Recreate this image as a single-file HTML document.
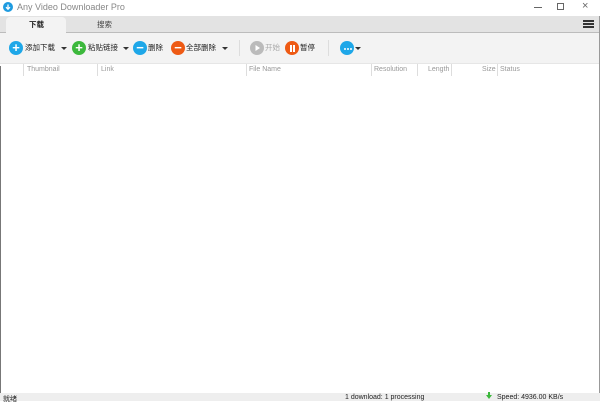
<!DOCTYPE html>
<html><head><meta charset="utf-8"><style>
*{margin:0;padding:0;box-sizing:border-box}
body{width:600px;height:401px;overflow:hidden;background:#fff;font-family:"Liberation Sans","Noto Sans CJK SC",sans-serif;position:relative}
.abs{position:absolute}
.t{font-size:7.5px;color:#222;white-space:nowrap;line-height:10px}
.ic{position:absolute;width:14px;height:14px;border-radius:50%;color:#fff;font-size:13px;line-height:14px;text-align:center;font-weight:bold}
.h{position:absolute;top:66px;font-size:7px;color:#999}
.sep{position:absolute;top:64px;width:1px;height:12px;background:#ddd}
.dd{position:absolute;width:0;height:0;border-left:3px solid transparent;border-right:3px solid transparent;border-top:3px solid #333}
</style></head><body>
<div class="abs" style="left:0;top:0;width:600px;height:16px;background:#fff"></div>
<div class="abs" style="left:3px;top:2px;width:10px;height:10px;border-radius:50%;background:#1e9be0"></div>
<svg class="abs" style="left:3px;top:2px" width="10" height="10"><path d="M5 2.5V7M3 5.2L5 7.2 7 5.2" stroke="#fff" stroke-width="1.3" fill="none"/></svg>
<div class="abs" style="left:17px;top:2px;font-size:9px;color:#888;white-space:nowrap">Any Video Downloader Pro</div>
<div class="abs" style="left:534px;top:7px;width:8px;height:1px;background:#666"></div>
<div class="abs" style="left:557px;top:3px;width:7px;height:7px;border:1px solid #666"></div>
<div class="abs" style="left:582px;top:0px;font-size:11px;color:#666">×</div>
<div class="abs" style="left:0;top:16px;width:600px;height:17px;background:#e3e3e3;border-bottom:1px solid #bcbcbc"></div>
<div class="abs" style="left:6px;top:17px;width:60px;height:16px;background:#f3f3f3;border-radius:4px 4px 0 0"></div>
<div class="abs t" style="left:29px;top:20px;font-weight:bold">下载</div>
<div class="abs t" style="left:97px;top:20px;color:#444">搜索</div>
<div class="abs" style="left:583px;top:20px;width:11px;height:2px;background:#333;box-shadow:0 3px 0 #333,0 6px 0 #333"></div>
<div class="abs" style="left:0;top:33px;width:600px;height:30px;background:#f3f3f3"></div>
<div class="ic" style="left:9px;top:41px;background:#1ea7e8">+</div>
<div class="abs t" style="left:25px;top:43px">添加下载</div>
<div class="dd" style="left:61px;top:47px"></div>
<div class="ic" style="left:72px;top:41px;background:#3cb83c">+</div>
<div class="abs t" style="left:88px;top:43px">粘贴链接</div>
<div class="dd" style="left:123px;top:47px"></div>
<div class="ic" style="left:133px;top:41px;background:#1ea7e8">−</div>
<div class="abs t" style="left:148px;top:43px">删除</div>
<div class="ic" style="left:171px;top:41px;background:#ee5a14">−</div>
<div class="abs t" style="left:186px;top:43px">全部删除</div>
<div class="dd" style="left:222px;top:47px"></div>
<div class="abs" style="left:239px;top:40px;width:1px;height:16px;background:#ddd"></div>
<div class="ic" style="left:250px;top:41px;background:#bbb"></div>
<svg class="abs" style="left:250px;top:41px" width="14" height="14"><path d="M5.5 4L10 7 5.5 10z" fill="#fff"/></svg>
<div class="abs t" style="left:265px;top:43px;color:#aaa">开始</div>
<div class="ic" style="left:285px;top:41px;background:#ee5a14"></div>
<div class="abs" style="left:289.5px;top:44.5px;width:2px;height:7px;background:#fff;box-shadow:3px 0 0 #fff"></div>
<div class="abs t" style="left:300px;top:43px">暂停</div>
<div class="abs" style="left:328px;top:40px;width:1px;height:16px;background:#ddd"></div>
<div class="ic" style="left:340px;top:41px;background:#1ea7e8"></div>
<div class="abs" style="left:343.5px;top:47.5px;width:2px;height:2px;background:#fff;border-radius:1px;box-shadow:3px 0 0 #fff,6px 0 0 #fff"></div>
<div class="dd" style="left:355px;top:47px"></div>
<div class="abs" style="left:0;top:63px;width:600px;height:1px;background:#e6e6e6"></div>
<div class="sep" style="left:23px"></div><div class="h" style="left:27px">Thumbnail</div>
<div class="sep" style="left:97px"></div><div class="h" style="left:101px">Link</div>
<div class="sep" style="left:246px"></div><div class="h" style="left:249px">File Name</div>
<div class="sep" style="left:371px"></div><div class="h" style="left:374px">Resolution</div>
<div class="sep" style="left:417px"></div><div class="h" style="left:428px">Length</div>
<div class="sep" style="left:451px"></div><div class="h" style="left:482px">Size</div>
<div class="sep" style="left:497px"></div><div class="h" style="left:500px">Status</div>
<div class="abs" style="left:0;top:66px;width:1px;height:335px;background:#777"></div>
<div class="abs" style="left:599px;top:16px;width:1px;height:385px;background:#999"></div>
<div class="abs" style="left:0;top:393px;width:600px;height:8px;background:#eee"></div>
<div class="abs" style="left:3px;top:394px;font-size:7px;color:#222;white-space:nowrap">就绪</div>
<div class="abs" style="left:345px;top:394px;font-size:7px;color:#222;white-space:nowrap">1 download: 1 processing</div>
<div class="abs" style="left:486px;top:395px;width:0;height:0;border-left:3px solid transparent;border-right:3px solid transparent;border-top:4px solid #3cb83c"></div>
<div class="abs" style="left:488px;top:392px;width:2px;height:3px;background:#3cb83c"></div>
<div class="abs" style="left:497px;top:394px;font-size:7px;color:#222;white-space:nowrap">Speed: 4936.00 KB/s</div>
</body></html>
